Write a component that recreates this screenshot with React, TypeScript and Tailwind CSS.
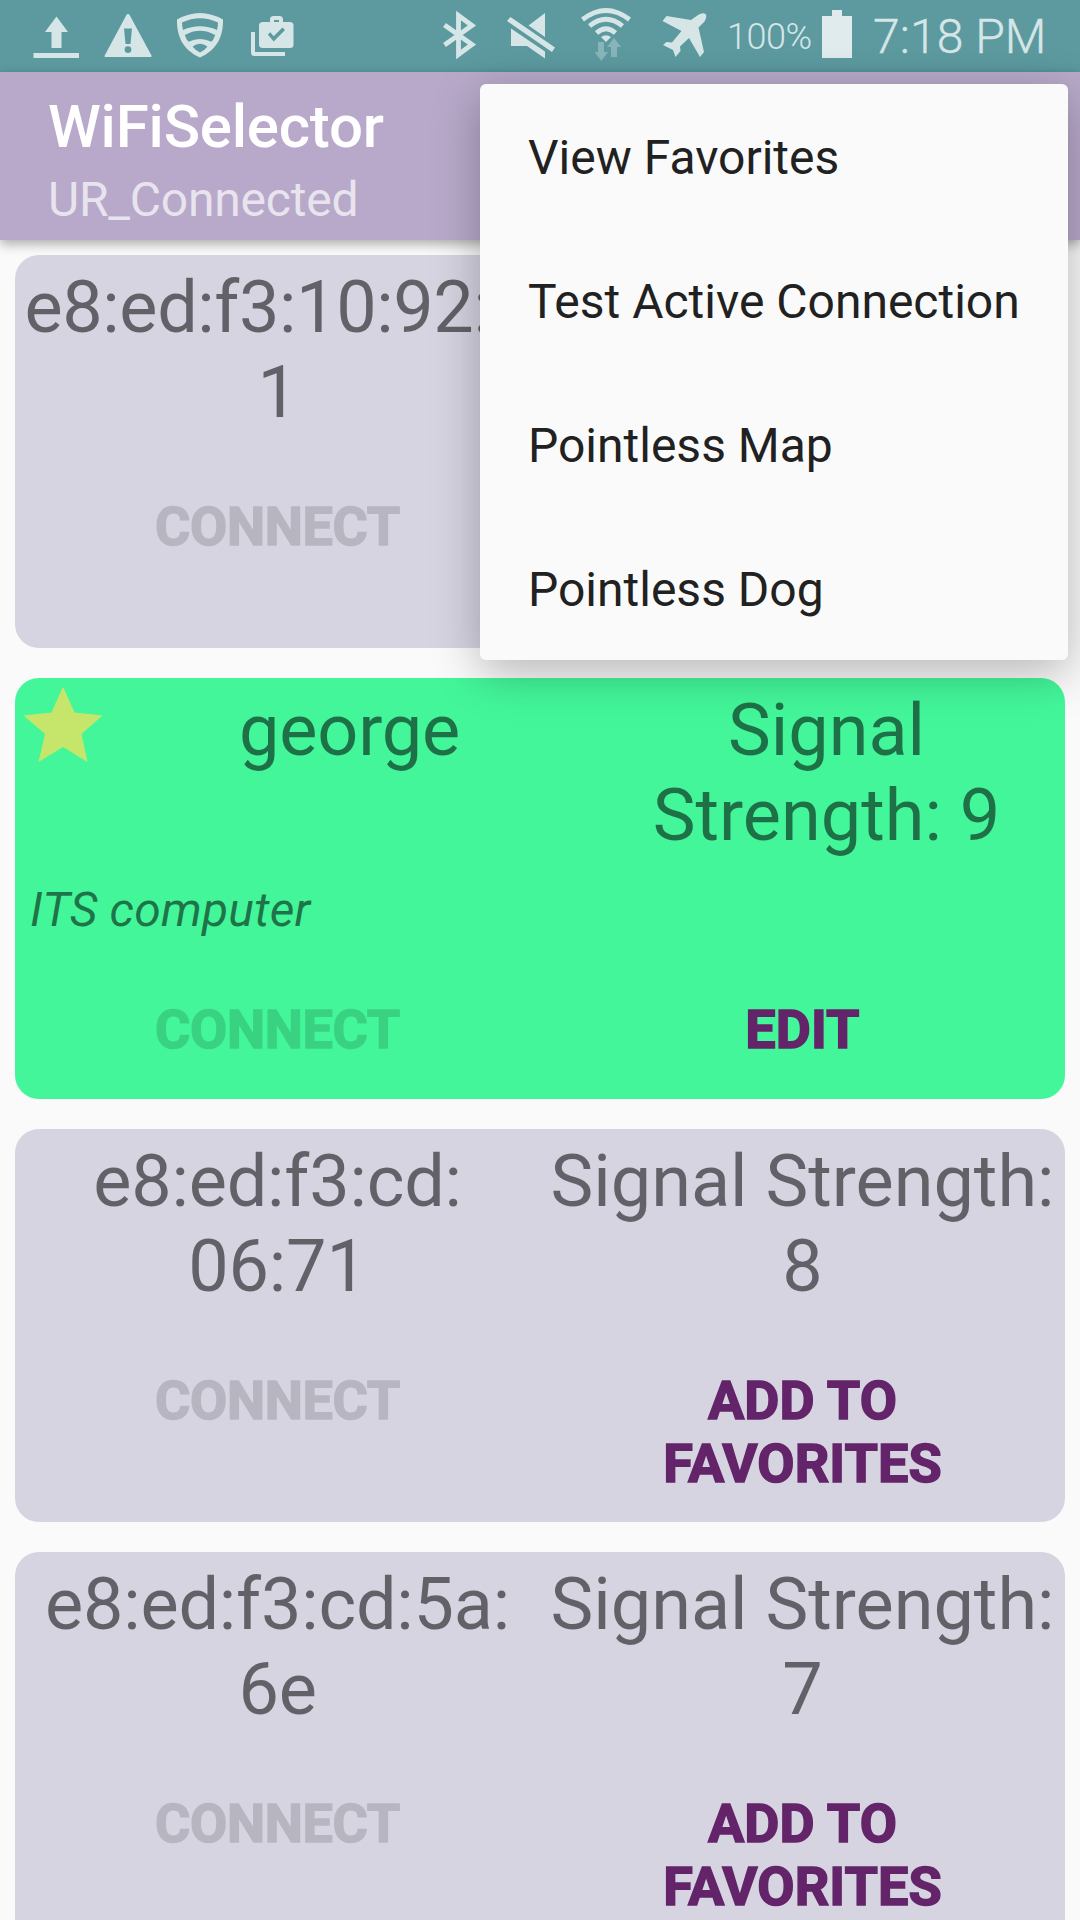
import React from "react";

type Network = {
  name: string[];
  signal: string[];
  favorite?: boolean;
  note?: string;
  action: string[];
};

const networks: Network[] = [
  { name: ["e8:ed:f3:10:92:9", "1"], signal: [], action: [] },
  { name: ["george"], signal: ["Signal", "Strength: 9"], favorite: true, note: "ITS computer", action: ["EDIT"] },
  { name: ["e8:ed:f3:cd:", "06:71"], signal: ["Signal Strength:", "8"], action: ["ADD TO", "FAVORITES"] },
  { name: ["e8:ed:f3:cd:5a:", "6e"], signal: ["Signal Strength:", "7"], action: ["ADD TO", "FAVORITES"] },
];

const menuItems = ["View Favorites", "Test Active Connection", "Pointless Map", "Pointless Dog"];

const ICON = "#d6e6e7";

/* Status icons share one vertical scale; x is the left edge of each icon's slot in the bar. */
function StatusIcon({ x, w, children }: { x: number; w: number; children: React.ReactNode }) {
  return (
    <svg width={w} height={72} viewBox={`${x} 0 ${w} 72`} fill={ICON} className="block shrink-0">
      {children}
    </svg>
  );
}

function StatusBar() {
  return (
    <div className="flex h-[72px] bg-[#5c9aa0] text-[#d6e6e7]">
      <StatusIcon x={0} w={92}>
        <path d="M56.5 16.5 68 32H61.5V48H51.5V32H45ZM33.5 53H79V58H33.5Z" />
      </StatusIcon>
      <StatusIcon x={92} w={72}>
        <path fillRule="evenodd" d="M128 14q1 0 1.6 1L151.500 55.500Q152 57 150.500 57H105.500Q104 57 104.700 55.500L126.400 15Q127 14 128 14ZM124 28.500 125.500 44H130.500L132 28.500ZM128 46.200a3.400 3.400 0 1 0 0 6.800a3.400 3.400 0 1 0 0-6.800Z" />
      </StatusIcon>
      <StatusIcon x={164} w={72}>
        <path
          fillRule="evenodd"
          d="M177 19.500Q200 6.500 223 19.500C223.500 36 217 50 200 57.500C183 50 176.500 36 177 19.500ZM182 22.500Q182 26 183 30Q200 22.500 217 30Q218 26 218 22.500Q200 14 182 22.500ZM184.800 35Q186 39 188.500 41.800Q200 36 211.500 41.800Q214 39 215.200 35Q200 26.500 184.800 35ZM192.500 46.500Q195.500 50.500 200 52.500Q204.500 50.500 207.500 46.500Q200 41 192.500 46.500Z"
        />
      </StatusIcon>
      <StatusIcon x={236} w={70}>
        <path
          fillRule="evenodd"
          d="M263 22H270V19.500Q270 16 273.500 16H279.500Q283 16 283 19.500V22H290Q293.500 22 293.500 25.500V44.500Q293.500 48 290 48H263Q259 48 259 44.500V25.500Q259 22 263 22ZM274 22H279V20H274ZM267.800 34.500 273.700 41.500 285 30 282.500 27.500 273.700 36.300 270.300 32.200Z"
        />
        <path d="M251 32H255V52H285V56H254.500Q251 56 251 52.500Z" />
      </StatusIcon>
      <div className="flex-1" />
      <StatusIcon x={430} w={60}>
        <path d="M444.500 25 472 44.500 458.500 54.500V15.500L472 25.500 444.500 45" fill="none" stroke={ICON} strokeWidth="4.800" />
      </StatusIcon>
      <StatusIcon x={490} w={80}>
        <path d="M510.500 17 555 47.500 552 52 507 21ZM545 13V37L528.500 25.500ZM511 28.500 545 51.500V58.500L527 46H511Z" />
      </StatusIcon>
      <StatusIcon x={570} w={80}>
        <g fill="none" stroke={ICON} strokeWidth="4.800">
          <path d="M582.500 19.500Q606 1.500 629.500 19.500" />
          <path d="M589.500 26Q606 12.500 622.500 26" />
          <path d="M596.500 33Q606 24.500 615.500 33" />
        </g>
        <path d="M601 37Q606 33.500 611 37L606 42Z" />
        <path d="M598 42H604V52H608L601.300 61 594.500 52H598ZM614 38 621 47H617V57H611V47H607Z" fill="#87b5b9" />
      </StatusIcon>
      <StatusIcon x={650} w={70}>
        <path d="M705.500 14Q707.500 16 704.500 21.500L698.500 27.500 704 52 700 57 689 38 680 46.500 680.500 51 675.500 57 673 50 663 45 666.500 42 672 42.500 681.500 31 662.500 21 666.500 16 691 20 698 15Q703 12 705.500 14Z" />
      </StatusIcon>
      <span className="w-[102px] pl-[7px] pt-[15px] text-[36px] leading-[44px] font-[350] tracking-[-0.5px] whitespace-nowrap">
        100%
      </span>
      <StatusIcon x={822} w={50}>
        <path d="M832 10H842V16H852V58H822V16H832Z" fill="#dfebec" />
      </StatusIcon>
      <span className="w-[208px] pl-px pt-[9px] text-[48px] leading-[56px] font-[350] tracking-[0.1px] whitespace-nowrap [-webkit-text-stroke:0.4px]">
        7:18 PM
      </span>
    </div>
  );
}

function Lines({ lines }: { lines: string[] }) {
  return (
    <>
      {lines.map((l) => (
        <span key={l} className="block">
          {l}
        </span>
      ))}
    </>
  );
}

function NetworkCard({ n }: { n: Network }) {
  const shade = n.favorite ? "bg-[#43f69a] h-[421px]" : "bg-[#d6d4e1] h-[393px]";
  return (
    <section className={`shrink-0 rounded-[24px] pt-[10px] whitespace-nowrap ${shade}`}>
      <div className="flex text-center text-[72px] leading-[85px] text-black/54">
        {n.favorite && (
          <svg width="96" height="80" viewBox="15 688 96 80" className="block shrink-0">
            <path
              fill="#c6e66b"
              d="M63 686.500 74.500 712.500 102.500 715.500 81.500 734 87.500 762 63 747 38.500 762 45 734 23.500 715.500 51.500 712.500Z"
            />
          </svg>
        )}
        <h2 className={`w-0 flex-1 ${n.signal.length ? "tracking-[-0.2px]" : "tracking-[-0.4px]"}`}>
          <Lines lines={n.name} />
        </h2>
        <p className="w-0 flex-1">
          <Lines lines={n.signal} />
        </p>
      </div>
      {n.note && (
        <p className="mt-[23px] pl-[15px] text-[48px] leading-[57px] tracking-[0.2px] italic text-black/54">{n.note}</p>
      )}
      <div className="mt-[60px] flex text-center text-[54px] leading-[63px] font-bold [-webkit-text-stroke:1.5px]">
        <button className="w-0 flex-1 self-start tracking-[-0.3px] text-black opacity-14" disabled>
          CONNECT
        </button>
        <button className="w-0 flex-1 tracking-[0.1px] text-[#632469]">
          <Lines lines={n.action} />
        </button>
      </div>
    </section>
  );
}

export default function App() {
  return (
    <div className="relative flex h-[1920px] w-[1080px] flex-col overflow-hidden bg-[#fafafa] font-['Roboto',sans-serif]">
      <StatusBar />
      <header className="relative h-[168px] shrink-0 bg-[#b8a9ca] pt-5 pl-12 shadow-[0_4px_11px_rgba(0,0,0,0.32)]">
        <h1 className="text-[60px] leading-[70px] font-medium tracking-[-0.2px] text-white">WiFiSelector</h1>
        <p className="text-[48px] leading-[76px] tracking-[-0.2px] text-white/70">UR_Connected</p>
      </header>
      <main className="flex flex-col gap-[30px] px-[15px] pt-[15px]">
        {networks.map((n) => (
          <NetworkCard key={n.name.join("")} n={n} />
        ))}
      </main>
      <nav className="absolute top-[84px] left-[480px] w-[588px] rounded-[6px] bg-[#fafafa] shadow-[0_12px_48px_rgba(0,0,0,0.28)]">
        {menuItems.map((m) => (
          <button key={m} className="flex h-36 w-full items-center pt-[3px] pl-12 text-[48px] whitespace-nowrap text-[#212121]">
            {m}
          </button>
        ))}
      </nav>
    </div>
  );
}
